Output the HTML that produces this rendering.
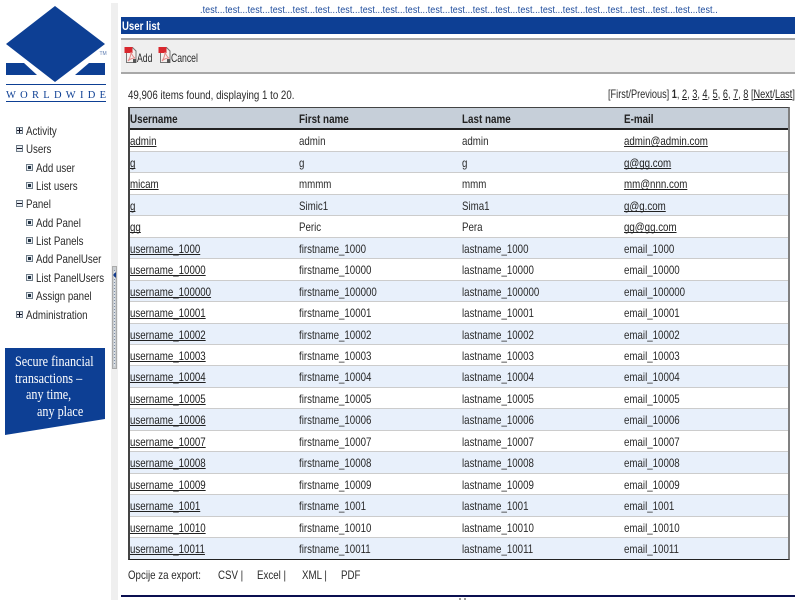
<!DOCTYPE html>
<html><head><meta charset="utf-8"><title>User list</title>
<style>
html,body{margin:0;padding:0;width:800px;height:600px;overflow:hidden;background:#fff}
body{position:relative;font:12px/14px "Liberation Sans",sans-serif;color:#2a2a2a}
.a{position:absolute}
.t,.r span{position:absolute;white-space:nowrap;transform-origin:0 50%;transform:scaleX(.81);font:12px/14px "Liberation Sans",sans-serif;color:#2a2a2a}
a,u{color:#222;text-decoration:underline;text-decoration-skip-ink:none}
#tb{position:absolute;left:128px;top:107px;width:658px;height:451px;border-top:1px solid #444;border-left:2px solid #444;border-right:2px solid #808080;border-bottom:1px solid #222;background:#fff}
#th{height:20.3px;background:#c6cfd9;border-bottom:2px solid #222;position:relative}
#th span{position:absolute;top:4px;white-space:nowrap;transform-origin:0 50%;transform:scaleX(.82);font:bold 12px/14px "Liberation Sans",sans-serif;color:#222}
.r{height:20.47px;border-bottom:1px solid #ccc;position:relative;background:#fff}
.r:nth-child(even){background:#e8f0fb}
.r span{top:4px}
.c1{left:0}.c2{left:169px}.c3{left:332px}.c4{left:494px}
.m{position:absolute;width:5px;height:5px;border:1px solid #6f7c88;background:#e8edf2}
.m i{position:absolute;left:0;top:2px;width:5px;height:1px;background:#112}
.m.p b{position:absolute;left:2px;top:0;width:1px;height:5px;background:#112}
.m.s i{left:1px;top:1px;width:3px;height:3px;background:#234}
</style></head><body>
<!-- sidebar band -->
<div class="a" style="left:111px;top:3px;width:7px;height:597px;background:#efefef"></div>
<div class="a" style="left:112px;top:266px;width:5px;height:103px;background:#c9cdd0;border:1px solid #aaa;box-sizing:border-box"></div>
<div class="a" style="left:114px;top:270px;width:1px;height:96px;background:repeating-linear-gradient(#7f8fa8 0 1px,#dfe3e8 1px 3px)"></div>
<div class="a" style="left:113px;top:272px;width:0;height:0;border:3px solid transparent;border-right:3px solid #123a8c;border-left:0"></div>

<!-- logo -->
<svg class="a" style="left:0;top:0" width="111" height="105">
<polygon points="55,6 105,44 55,82 6,44" fill="#0d3f94"/>
<polygon points="6,63 24,63 37,75 6,75" fill="#0d3f94"/>
<polygon points="105,63 89,63 75,75 105,75" fill="#0d3f94"/>
<rect x="6" y="84" width="100" height="1" fill="#0d3f94"/>
<rect x="6" y="101" width="100" height="1" fill="#0d3f94"/>
<text x="99.500" y="55" font-family="Liberation Sans" font-size="5" fill="#5a7ab0">TM</text>
<text x="6" y="98" font-family="Liberation Serif" font-size="10.500" fill="#0d3f94" textLength="100" lengthAdjust="spacing">WORLDWIDE</text>
</svg>

<!-- menu -->
<div class="m p" style="left:16px;top:127px"><i></i><b></b></div><div class="t" style="left:26px;top:124px">Activity</div>
<div class="m" style="left:16px;top:145px"><i></i></div><div class="t" style="left:26px;top:142px">Users</div>
<div class="m s" style="left:26px;top:164px"><i></i></div><div class="t" style="left:36px;top:161px">Add user</div>
<div class="m s" style="left:26px;top:182px"><i></i></div><div class="t" style="left:36px;top:179px">List users</div>
<div class="m" style="left:16px;top:200px"><i></i></div><div class="t" style="left:26px;top:197px">Panel</div>
<div class="m s" style="left:26px;top:219px"><i></i></div><div class="t" style="left:36px;top:216px">Add Panel</div>
<div class="m s" style="left:26px;top:237px"><i></i></div><div class="t" style="left:36px;top:234px">List Panels</div>
<div class="m s" style="left:26px;top:255px"><i></i></div><div class="t" style="left:36px;top:252px">Add PanelUser</div>
<div class="m s" style="left:26px;top:274px"><i></i></div><div class="t" style="left:36px;top:271px">List PanelUsers</div>
<div class="m s" style="left:26px;top:292px"><i></i></div><div class="t" style="left:36px;top:289px">Assign panel</div>
<div class="m p" style="left:16px;top:311px"><i></i><b></b></div><div class="t" style="left:26px;top:308px">Administration</div>

<!-- banner -->
<svg class="a" style="left:0;top:340px" width="111" height="100"><polygon points="5,8 105,8 105,79 5,95" fill="#0d3f94"/></svg>
<div class="t" style="left:15px;top:354px;color:#fff;font:15px/16px 'Liberation Serif',serif">Secure financial</div>
<div class="t" style="left:15px;top:371px;color:#fff;font:15px/16px 'Liberation Serif',serif">transactions –</div>
<div class="t" style="left:26px;top:387px;color:#fff;font:15px/16px 'Liberation Serif',serif">any time,</div>
<div class="t" style="left:37px;top:404px;color:#fff;font:15px/16px 'Liberation Serif',serif">any place</div>

<!-- top marquee -->
<div class="t" style="left:200px;top:5px;color:#1b4a9c;font:10px/12px 'Liberation Sans',sans-serif;transform:scaleX(.895);letter-spacing:.1px">.test...test...test...test...test...test...test...test...test...test...test...test...test...test...test...test...test...test...test...test...test...test...test..</div>

<!-- title -->
<div class="a" style="left:121px;top:17px;width:674px;height:17px;background:#0d3f94"></div>
<div class="t" style="left:122px;top:19px;color:#fff;font:bold 12px/14px 'Liberation Sans',sans-serif;transform:scaleX(.8)">User list</div>

<!-- toolbar -->
<div class="a" style="left:121px;top:38px;width:674px;height:36px;background:#efefef;border-top:2px solid #a8a8a8;border-bottom:2px solid #a8a8a8;box-sizing:border-box"></div>
<svg class="a" style="left:124px;top:46px" width="14" height="18"><path d="M2.500 1.500h6l3.500 3.500v11.500h-9.500z" fill="#f4f0ee" stroke="#777"/><rect x="0.500" y="1" width="8" height="6" fill="#d9272e"/><path d="M4 15c2-3 3-6 3-9 1 3 2 5 4 6-3 0-5 1-7 3z" fill="none" stroke="#e58a8a"/><rect x="9" y="13" width="3" height="4" fill="#555"/></svg>
<svg class="a" style="left:158px;top:46px" width="14" height="18"><path d="M2.500 1.500h6l3.500 3.500v11.500h-9.500z" fill="#f4f0ee" stroke="#777"/><rect x="0.500" y="1" width="8" height="6" fill="#d9272e"/><path d="M4 15c2-3 3-6 3-9 1 3 2 5 4 6-3 0-5 1-7 3z" fill="none" stroke="#e58a8a"/><rect x="9" y="13" width="3" height="4" fill="#555"/></svg>
<div class="t" style="left:137px;top:51px;transform:scaleX(.72)">Add</div>
<div class="t" style="left:171px;top:51px;transform:scaleX(.72)">Cancel</div>

<!-- counts -->
<div class="t" style="left:128px;top:88px">49,906 items found, displaying 1 to 20.</div>
<div class="t" style="left:608px;top:87px;transform:scaleX(.765)">[First/Previous] <b>1</b>, <u>2</u>, <u>3</u>, <u>4</u>, <u>5</u>, <u>6</u>, <u>7</u>, <u>8</u> [<u>Next</u>/<u>Last</u>]</div>

<!-- table -->
<div id="tb">
<div id="th"><span class="c1">Username</span><span class="c2">First name</span><span class="c3">Last name</span><span class="c4">E-mail</span></div>
<div>
<div class="r"><span class="c1"><a>admin</a></span><span class="c2">admin</span><span class="c3">admin</span><span class="c4"><a>admin@admin.com</a></span></div>
<div class="r"><span class="c1"><a>g</a></span><span class="c2">g</span><span class="c3">g</span><span class="c4"><a>g@gg.com</a></span></div>
<div class="r"><span class="c1"><a>micam</a></span><span class="c2">mmmm</span><span class="c3">mmm</span><span class="c4"><a>mm@nnn.com</a></span></div>
<div class="r"><span class="c1"><a>g</a></span><span class="c2">Simic1</span><span class="c3">Sima1</span><span class="c4"><a>g@g.com</a></span></div>
<div class="r"><span class="c1"><a>gg</a></span><span class="c2">Peric</span><span class="c3">Pera</span><span class="c4"><a>gg@gg.com</a></span></div>
<div class="r"><span class="c1"><a>username_1000</a></span><span class="c2">firstname_1000</span><span class="c3">lastname_1000</span><span class="c4">email_1000</span></div>
<div class="r"><span class="c1"><a>username_10000</a></span><span class="c2">firstname_10000</span><span class="c3">lastname_10000</span><span class="c4">email_10000</span></div>
<div class="r"><span class="c1"><a>username_100000</a></span><span class="c2">firstname_100000</span><span class="c3">lastname_100000</span><span class="c4">email_100000</span></div>
<div class="r"><span class="c1"><a>username_10001</a></span><span class="c2">firstname_10001</span><span class="c3">lastname_10001</span><span class="c4">email_10001</span></div>
<div class="r"><span class="c1"><a>username_10002</a></span><span class="c2">firstname_10002</span><span class="c3">lastname_10002</span><span class="c4">email_10002</span></div>
<div class="r"><span class="c1"><a>username_10003</a></span><span class="c2">firstname_10003</span><span class="c3">lastname_10003</span><span class="c4">email_10003</span></div>
<div class="r"><span class="c1"><a>username_10004</a></span><span class="c2">firstname_10004</span><span class="c3">lastname_10004</span><span class="c4">email_10004</span></div>
<div class="r"><span class="c1"><a>username_10005</a></span><span class="c2">firstname_10005</span><span class="c3">lastname_10005</span><span class="c4">email_10005</span></div>
<div class="r"><span class="c1"><a>username_10006</a></span><span class="c2">firstname_10006</span><span class="c3">lastname_10006</span><span class="c4">email_10006</span></div>
<div class="r"><span class="c1"><a>username_10007</a></span><span class="c2">firstname_10007</span><span class="c3">lastname_10007</span><span class="c4">email_10007</span></div>
<div class="r"><span class="c1"><a>username_10008</a></span><span class="c2">firstname_10008</span><span class="c3">lastname_10008</span><span class="c4">email_10008</span></div>
<div class="r"><span class="c1"><a>username_10009</a></span><span class="c2">firstname_10009</span><span class="c3">lastname_10009</span><span class="c4">email_10009</span></div>
<div class="r"><span class="c1"><a>username_1001</a></span><span class="c2">firstname_1001</span><span class="c3">lastname_1001</span><span class="c4">email_1001</span></div>
<div class="r"><span class="c1"><a>username_10010</a></span><span class="c2">firstname_10010</span><span class="c3">lastname_10010</span><span class="c4">email_10010</span></div>
<div class="r" style="border-bottom:0"><span class="c1"><a>username_10011</a></span><span class="c2">firstname_10011</span><span class="c3">lastname_10011</span><span class="c4">email_10011</span></div>
</div>
</div>

<!-- export -->
<div class="t" style="left:128px;top:568px">Opcije za export:</div>
<div class="t" style="left:218px;top:568px">CSV |</div>
<div class="t" style="left:257px;top:568px">Excel |</div>
<div class="t" style="left:302px;top:568px">XML |</div>
<div class="t" style="left:341px;top:568px">PDF</div>

<!-- footer line -->
<div class="a" style="left:121px;top:595px;width:674px;height:2px;background:#0a0f50"></div>
<div class="a" style="left:459px;top:598px;width:2px;height:2px;background:#999"></div>
<div class="a" style="left:464px;top:598px;width:2px;height:2px;background:#999"></div>
</body></html>
